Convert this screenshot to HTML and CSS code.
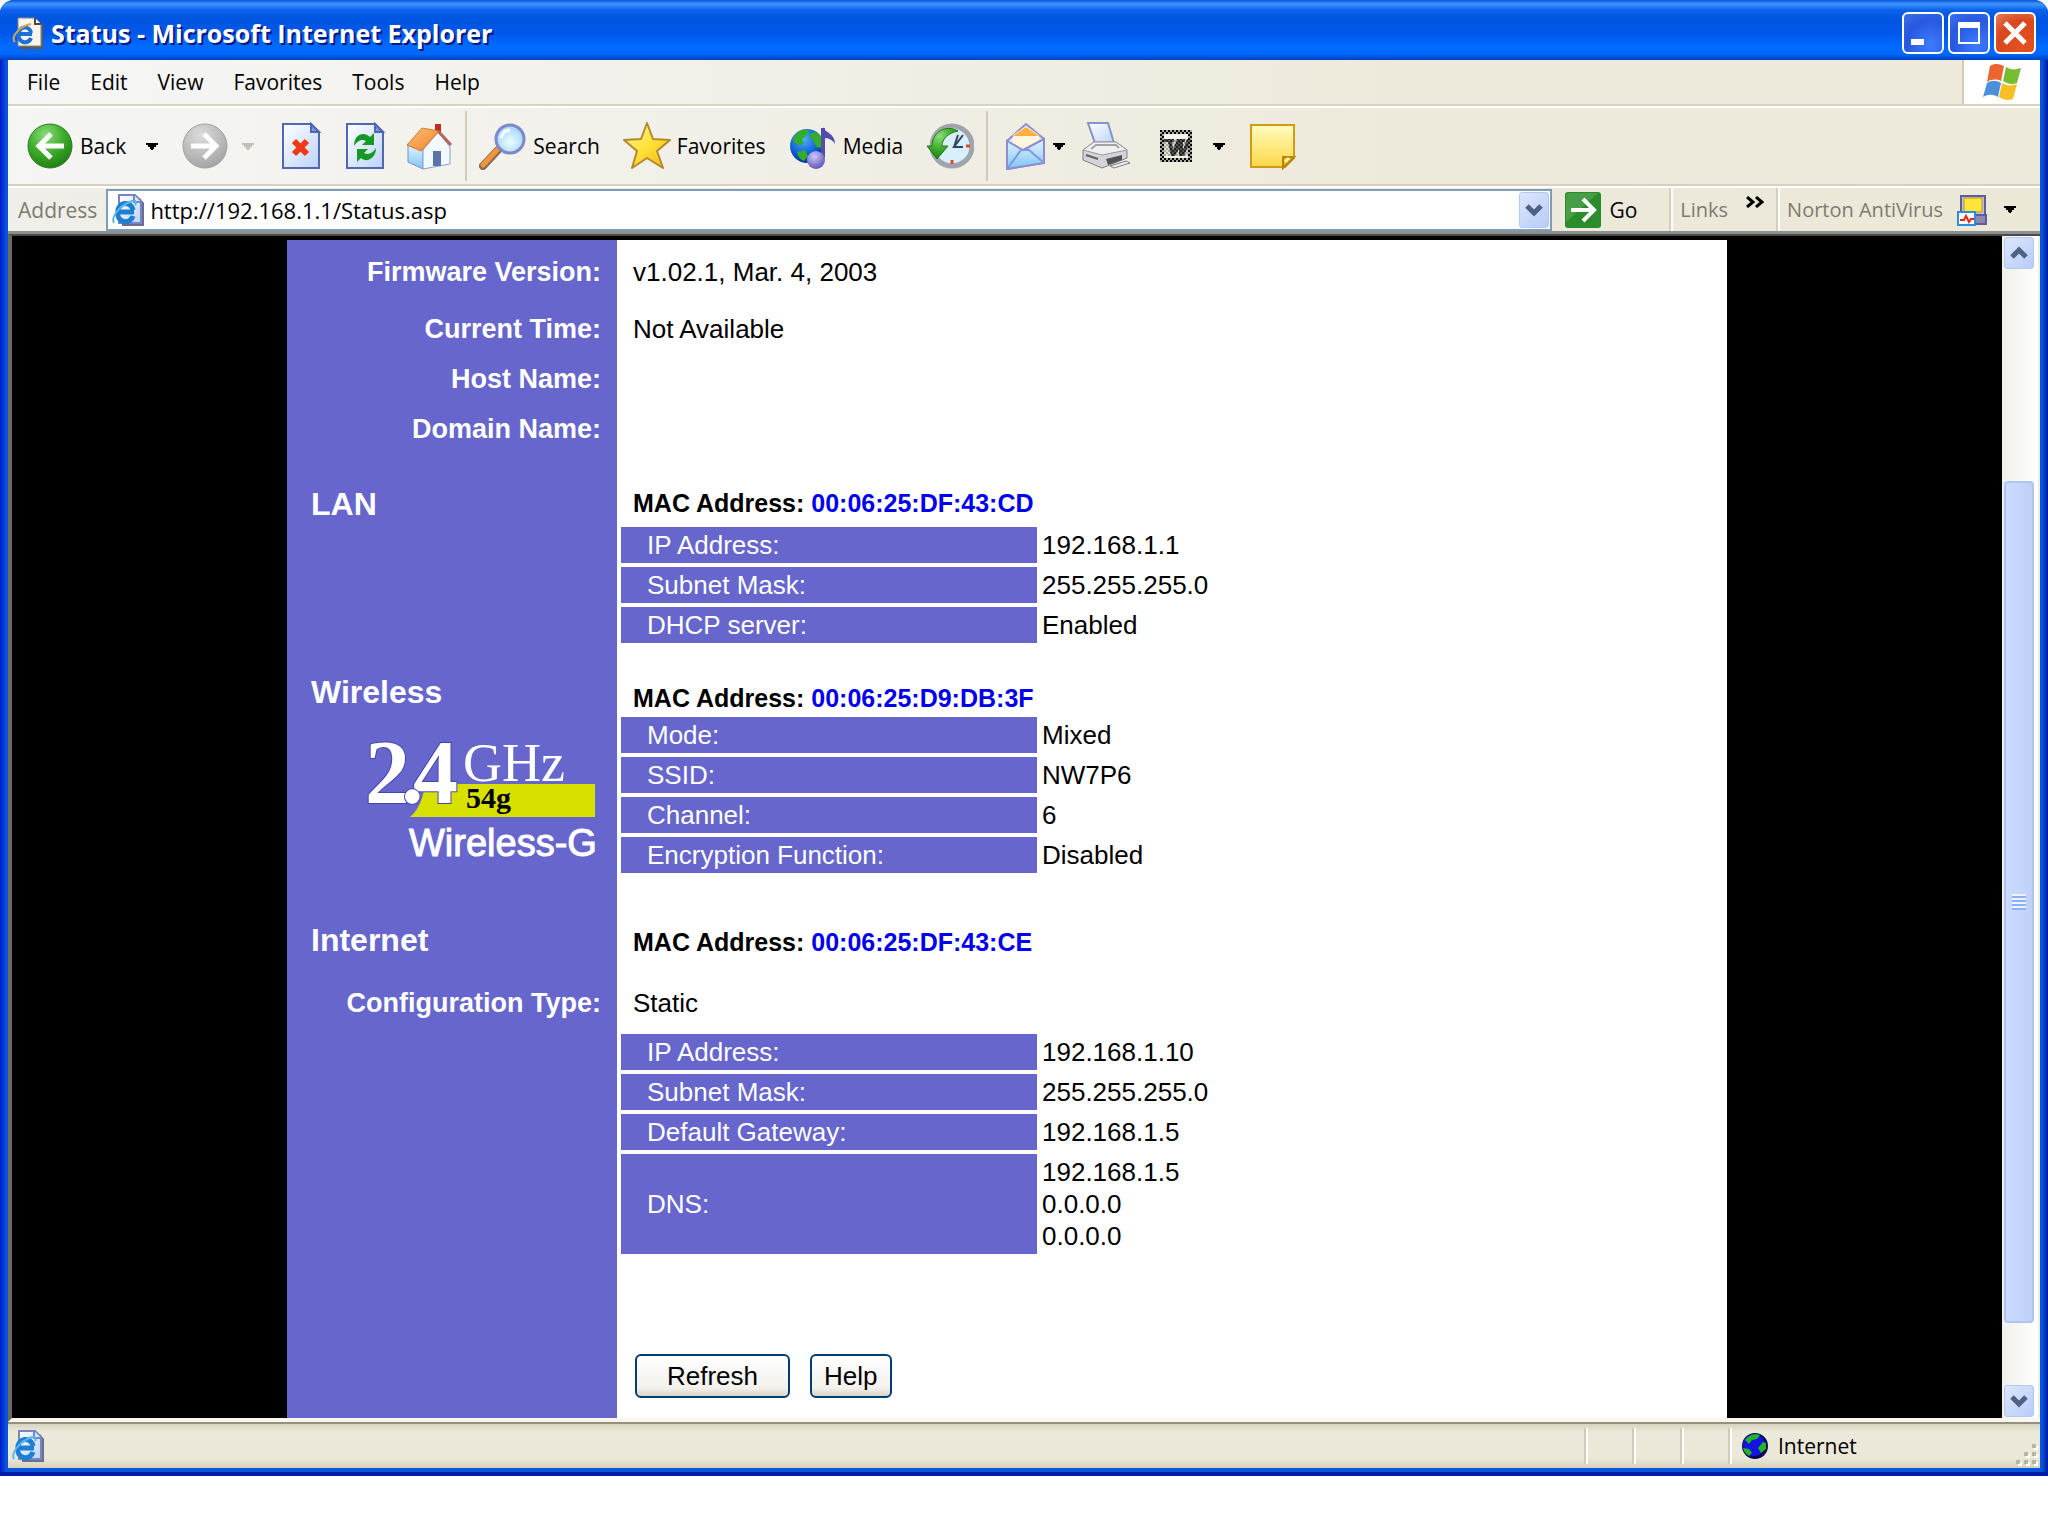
FILE: index.html
```html
<!DOCTYPE html>
<html lang="en">
<head>
    <meta charset="UTF-8">
    <meta name="viewport" content="width=device-width, initial-scale=1.0">
    <title>Status - Microsoft Internet Explorer</title>
    <link rel="stylesheet" href="styles.css">
</head>
<body>
    <!-- shared gradients and symbols -->
    <svg class="defs" width="0" height="0" aria-hidden="true">
        <defs>
            <radialGradient id="green" cx="0.4" cy="0.25" r="0.8">
                <stop offset="0" stop-color="#8fdc7c"/>
                <stop offset="0.5" stop-color="#3fae2c"/>
                <stop offset="1" stop-color="#1d7a12"/>
            </radialGradient>
            <radialGradient id="grey" cx="0.4" cy="0.25" r="0.8">
                <stop offset="0" stop-color="#dcdcdc"/>
                <stop offset="1" stop-color="#a2a2a2"/>
            </radialGradient>
            <linearGradient id="paper" x1="0" y1="0" x2="1" y2="1">
                <stop offset="0" stop-color="#ffffff"/>
                <stop offset="1" stop-color="#bcd2fa"/>
            </linearGradient>
            <linearGradient id="roof" x1="0" y1="0" x2="1" y2="1">
                <stop offset="0" stop-color="#ffc27a"/>
                <stop offset="1" stop-color="#f08028"/>
            </linearGradient>
            <linearGradient id="sky" x1="0" y1="0" x2="0" y2="1">
                <stop offset="0" stop-color="#e4f6ff"/>
                <stop offset="1" stop-color="#7fc4f4"/>
            </linearGradient>
            <radialGradient id="lens" cx="0.5" cy="0.6" r="0.6">
                <stop offset="0" stop-color="#eaffff"/>
                <stop offset="1" stop-color="#9fd0fb"/>
            </radialGradient>
            <linearGradient id="gold" x1="0" y1="0" x2="1" y2="1">
                <stop offset="0" stop-color="#fff9a8"/>
                <stop offset="0.5" stop-color="#ffe23a"/>
                <stop offset="1" stop-color="#f8b414"/>
            </linearGradient>
            <radialGradient id="ocean" cx="0.4" cy="0.3" r="0.8">
                <stop offset="0" stop-color="#4fb0ff"/>
                <stop offset="0.6" stop-color="#0a5ad0"/>
                <stop offset="1" stop-color="#04256e"/>
            </radialGradient>
            <radialGradient id="violet" cx="0.4" cy="0.3" r="0.8">
                <stop offset="0" stop-color="#cdc8ff"/>
                <stop offset="1" stop-color="#5048a8"/>
            </radialGradient>
            <linearGradient id="note" x1="0" y1="0" x2="0" y2="1">
                <stop offset="0" stop-color="#fffcc0"/>
                <stop offset="1" stop-color="#fcd848"/>
            </linearGradient>
            <pattern id="dither" width="4" height="4" patternUnits="userSpaceOnUse">
                <rect width="4" height="4" fill="#a8a8a0"/>
                <rect width="2" height="2" fill="#000"/>
                <rect x="2" y="2" width="2" height="2" fill="#000"/>
            </pattern>
        </defs>
        <symbol id="page-icon" viewBox="0 0 32 32">
            <path d="M10 4h18l4 5v23H10z" fill="#6c6c94"/>
            <path d="M7 1h16l6 6v22H7z" fill="url(#paper)" stroke="#7486c4" stroke-width="2"/>
            <path d="M22 1v7h7" fill="#dfe8ff" stroke="#7486c4" stroke-width="2"/>
            <path d="M22 18H6a7 7 0 0 1 15-2M6 18a7 7 0 0 0 15 4" fill="none" stroke="#1c7fd0" stroke-width="5"/>
            <path d="M2 29C-1 24 6 12 20 7c4-1 5 1 3 4" fill="none" stroke="#5ab6f0" stroke-width="2"/>
        </symbol>
        <symbol id="chevron" viewBox="0 0 18 14">
            <path d="M2 3l7 7 7-7" fill="none" stroke="#4d6185" stroke-width="5"/>
        </symbol>
        <symbol id="drop" viewBox="0 0 12 7">
            <path d="M0 0h12v2h-2v2h-2v2h-1v1H5V6H4V4H2V2H0z"/>
        </symbol>
    </svg>

    <div class="window">
        <header class="title-bar">
            <svg class="title-icon" viewBox="0 0 32 32">
                <path d="M8 3h18l5 5v24H8z" fill="#5a5a50"/>
                <path d="M6 1h17l6 6v22H6z" fill="#f6f4ec" stroke="#8a8878" stroke-width="1"/>
                <path d="M23 1v6h6" fill="#fff" stroke="#4a4a40" stroke-width="2"/>
                <path d="M20 17H7a6 6 0 0 1 12-1M7 17a6 6 0 0 0 12 4" fill="none" stroke="#1c70d8" stroke-width="4"/>
                <path d="M3 25C-2 20 8 9 19 7" fill="none" stroke="#d0a850" stroke-width="2"/>
            </svg>
            <h1 class="title">Status - Microsoft Internet Explorer</h1>
            <button class="caption" aria-label="Minimize">
                <svg viewBox="0 0 38 38"><path d="M7 25h13v6H7z" fill="#fff"/></svg>
            </button>
            <button class="caption" aria-label="Maximize">
                <svg viewBox="0 0 38 38"><path d="M8 8h22v22H8zM10 14v14h18V14z" fill="#fff" fill-rule="evenodd"/></svg>
            </button>
            <button class="caption close" aria-label="Close">
                <svg viewBox="0 0 38 38"><path d="M9 9l20 20M29 9L9 29" stroke="#fff" stroke-width="5"/></svg>
            </button>
        </header>

        <nav class="menu-bar">
            <button>File</button>
            <button>Edit</button>
            <button>View</button>
            <button>Favorites</button>
            <button>Tools</button>
            <button>Help</button>
            <div class="flag">
                <svg viewBox="0 0 40 38">
                    <path d="M8 3c5-3 9-2 14 0l-3 15c-5-2-9-2-14 1z" fill="#ee6430"/>
                    <path d="M24 4c5 3 9 3 15 1l-4 15c-5 2-9 1-14-2z" fill="#78bc34"/>
                    <path d="M5 20c5-3 9-3 14 0l-3 14c-5-3-10-3-15 0z" fill="#4c90dc"/>
                    <path d="M20 20c5 3 10 3 15 1l-4 15c-5 2-9 1-14-2z" fill="#f6c024"/>
                </svg>
            </div>
        </nav>

        <div class="toolbar">
            <button class="tool text">
                <svg viewBox="0 0 48 48">
                    <circle cx="24" cy="24" r="22" fill="url(#green)" stroke="#2c7c20" stroke-width="1"/>
                    <path d="M38 24H13M25 12L13 24l12 12" fill="none" stroke="#fff" stroke-width="5"/>
                </svg>
                <span>Back</span>
            </button>
            <button class="arrow" aria-label="Back history"><svg><use href="#drop"/></svg></button>
            <button class="tool" aria-label="Forward" disabled>
                <svg viewBox="0 0 48 48">
                    <circle cx="24" cy="24" r="22" fill="url(#grey)" stroke="#a0a0a0" stroke-width="1"/>
                    <path d="M10 24h25M23 12l12 12-12 12" fill="none" stroke="#fff" stroke-width="5"/>
                </svg>
            </button>
            <button class="arrow off" aria-label="Forward history" disabled><svg><use href="#drop"/></svg></button>
            <button class="tool" aria-label="Stop">
                <svg viewBox="0 0 48 48">
                    <path d="M6 2h28l8 8v36H6z" fill="url(#paper)" stroke="#5068b4" stroke-width="2"/>
                    <path d="M34 2v8h8z" fill="#7c98dc" stroke="#5068b4" stroke-width="2"/>
                    <path d="M17 19l13 13M30 19L17 32" stroke="#f03818" stroke-width="6"/>
                </svg>
            </button>
            <button class="tool" aria-label="Refresh">
                <svg viewBox="0 0 48 48">
                    <path d="M6 2h28l8 8v36H6z" fill="url(#paper)" stroke="#5068b4" stroke-width="2"/>
                    <path d="M34 2v8h8z" fill="#7c98dc" stroke="#5068b4" stroke-width="2"/>
                    <path d="M13 24c0-12 10-15 16-9l4-4v12H21l4-4c-4-2-8-1-12 5z" fill="#149a24"/>
                    <path d="M35 26c0 11-10 15-15 10l-4 4V27h11l-4 4c4 2 8 1 12-5z" fill="#149a24"/>
                </svg>
            </button>
            <button class="tool" aria-label="Home">
                <svg viewBox="0 0 48 48">
                    <path d="M30 2h6v12h-6z" fill="#c02c20"/>
                    <path d="M3 22v18l15 7V22z" fill="url(#sky)" stroke="#6c94c8" stroke-width="1"/>
                    <path d="M18 28L33 10l12 15v17L18 47z" fill="#f4f8ff" stroke="#8ca0cc" stroke-width="1"/>
                    <path d="M28 29h8v15h-8z" fill="#5a74a8"/>
                    <path d="M17 6l17 3-18 20L2 23z" fill="url(#roof)" stroke="#d87828" stroke-width="1"/>
                    <path d="M33 9l13 14" stroke="#b06858" stroke-width="3"/>
                </svg>
            </button>
            <span class="sep"></span>
            <button class="tool text">
                <svg viewBox="0 0 48 48">
                    <path d="M4 44l15-16" stroke="#8c6c58" stroke-width="8" stroke-linecap="round"/>
                    <path d="M4 43l14-15" stroke="#f09838" stroke-width="5" stroke-linecap="round"/>
                    <circle cx="31" cy="17" r="14" fill="url(#lens)" stroke="#7c88cc" stroke-width="3"/>
                    <path d="M22 16c1-5 4-8 9-8" fill="none" stroke="#fff" stroke-width="3"/>
                </svg>
                <span>Search</span>
            </button>
            <button class="tool text">
                <svg viewBox="0 0 48 48">
                    <path d="M24 1l6 16 17 1-13 11 6 17-16-10-15 10 5-17L1 18l17-1z" fill="url(#gold)" stroke="#b4882c" stroke-width="2" stroke-linejoin="round"/>
                </svg>
                <span>Favorites</span>
            </button>
            <button class="tool text">
                <svg viewBox="0 0 48 48">
                    <circle cx="18" cy="24" r="17" fill="url(#ocean)"/>
                    <path d="M5 15c5-8 12-8 15-7l-2 5-5 4 2 5-6 1-5-4zM24 10c5 0 8 3 9 8v8l-6-1-3-7-4-3zM8 30l8-2 3 6-4 5c-4-2-6-4-7-9z" fill="#34ac2c"/>
                    <path d="M34 6v30" stroke="#544cac" stroke-width="4"/>
                    <path d="M34 5c2 6 12 6 12 17-3-5-7-6-12-6z" fill="#544cac"/>
                    <circle cx="27" cy="38" r="9" fill="url(#violet)"/>
                </svg>
                <span>Media</span>
            </button>
            <button class="tool" aria-label="History">
                <svg viewBox="0 0 48 48">
                    <circle cx="26" cy="24" r="20" fill="#d8f0fc" stroke="#a0a4ac" stroke-width="5"/>
                    <path d="M26 38v4M40 24h4" stroke="#e04828" stroke-width="3"/>
                    <path d="M37 13L28 25h9M28 25l4-12" fill="none" stroke="#34445c" stroke-width="2"/>
                    <path d="M32 9C20 2 6 10 6 24H1l10 13 11-13h-6c0-7 6-13 16-15z" fill="url(#green)" stroke="#1c7c14" stroke-width="1"/>
                </svg>
            </button>
            <span class="sep"></span>
            <button class="tool mail" aria-label="Mail">
                <svg viewBox="0 0 40 48">
                    <path d="M1 19L20 2l18 15v24L1 47z" fill="#e4e8ff" stroke="#8c8cd0" stroke-width="2"/>
                    <path d="M7 13l13-9 13 9v11l-13 8-13-6z" fill="#fff4dc"/>
                    <path d="M7 14l13-9 13 9z" fill="#fbb040"/>
                    <path d="M1 19l16 9 21-11v24L1 47z" fill="url(#sky)" stroke="#8c8cd0" stroke-width="2"/>
                    <path d="M1 47l14-19h8l15 13" fill="none" stroke="#8098dc" stroke-width="2"/>
                </svg>
            </button>
            <button class="arrow mail-arrow" aria-label="Mail options"><svg><use href="#drop"/></svg></button>
            <button class="tool print" aria-label="Print">
                <svg viewBox="0 0 48 48">
                    <path d="M6 1h20l6 20H13z" fill="url(#paper)" stroke="#8494cc" stroke-width="2"/>
                    <path d="M1 28l11-8h22l11 8v8L20 46 1 38z" fill="#d4d4d8" stroke="#808084" stroke-width="1"/>
                    <path d="M1 28l19 5 25-5-11-8H12z" fill="#f0f0f2" stroke="#98989c" stroke-width="1"/>
                    <path d="M9 27l5-4h20l3 3" fill="none" stroke="#a4a4a8" stroke-width="2"/>
                    <path d="M24 37l16-4v5l-14 5z" fill="#505058"/>
                    <path d="M28 44l16-5 4 2-16 5z" fill="#ececf0" stroke="#808084" stroke-width="1"/>
                    <path d="M4 33l12 4" stroke="#606064" stroke-width="2"/>
                </svg>
            </button>
            <button class="tool" aria-label="Edit with Word">
                <svg viewBox="0 0 48 48">
                    <path d="M8 8h32v32H8z" fill="url(#dither)"/>
                    <path d="M12 12h24v24H12z" fill="#f4f4ea"/>
                    <path d="M12 17h10v3h-2l1 8 4-11h8v3h-2v8l4-11h3v3l-6 14h-5v-7l-4 7h-4l-3-14h-4z" fill="#303030"/>
                    <path d="M12 17h26v17H12z" fill="url(#dither)" opacity="0.3"/>
                </svg>
            </button>
            <button class="arrow" aria-label="Edit options"><svg><use href="#drop"/></svg></button>
            <button class="tool" aria-label="Discuss">
                <svg viewBox="0 0 48 48">
                    <path d="M3 3h43v33l-9 9H3z" fill="url(#note)" stroke="#d09c18" stroke-width="2"/>
                    <path d="M35 46V35h11z" fill="#e8b830" stroke="#b88408" stroke-width="2"/>
                    <path d="M37 40l4-4" stroke="#fff4a0" stroke-width="3"/>
                </svg>
            </button>
        </div>

        <div class="address-bar">
            <label class="muted" for="address">Address</label>
            <div class="combo">
                <svg class="page-icon"><use href="#page-icon"/></svg>
                <input type="text" id="address" value="http://192.168.1.1/Status.asp">
                <button class="scroll-button" aria-label="Show addresses"><svg><use href="#chevron"/></svg></button>
            </div>
            <button class="go">
                <svg viewBox="0 0 36 36">
                    <rect width="36" height="36" rx="3" fill="#2c8c2c"/>
                    <path d="M3 1h30L1 30V3z" fill="#58ac58" opacity="0.6"/>
                    <path d="M6 18h22M18 7l11 11-11 11" fill="none" stroke="#fff" stroke-width="4"/>
                </svg>
                <span>Go</span>
            </button>
            <div class="band links">
                <span class="muted">Links</span>
                <svg class="more" viewBox="0 0 18 12"><path d="M1 1l6 5-6 5M10 1l6 5-6 5" fill="none" stroke="#000" stroke-width="3"/></svg>
            </div>
            <div class="band norton">
                <span class="muted">Norton AntiVirus</span>
                <svg class="norton-icon" viewBox="0 0 32 32">
                    <path d="M4 2h24v21H4z" fill="#c4c0dc" stroke="#605c98" stroke-width="2"/>
                    <path d="M7 4h18v14H7z" fill="#ffe43c" stroke="#b89820" stroke-width="1"/>
                    <path d="M18 21h11v9H18z" fill="#8c88b4" stroke="#605c98" stroke-width="2"/>
                    <path d="M1 18h17v13H1z" fill="#fff" stroke="#2890dc" stroke-width="2"/>
                    <path d="M3 26h4l2-4 3 6 2-3h3" fill="none" stroke="#e02818" stroke-width="2"/>
                </svg>
                <button class="arrow" aria-label="Norton AntiVirus options"><svg><use href="#drop"/></svg></button>
            </div>
        </div>

        <div class="viewport">
            <main class="page">
                <div class="row first">
                    <div class="side label">Firmware Version:</div>
                    <div class="main value">v1.02.1, Mar. 4, 2003</div>
                </div>
                <div class="row">
                    <div class="side label">Current Time:</div>
                    <div class="main value">Not Available</div>
                </div>
                <div class="row">
                    <div class="side label">Host Name:</div>
                    <div class="main value"></div>
                </div>
                <div class="row">
                    <div class="side label">Domain Name:</div>
                    <div class="main value"></div>
                </div>

                <section class="row block lan">
                    <div class="side">
                        <h2>LAN</h2>
                    </div>
                    <div class="main">
                        <p class="mac">MAC Address: <span>00:06:25:DF:43:CD</span></p>
                        <table>
                            <tr><th>IP Address:</th><td>192.168.1.1</td></tr>
                            <tr><th>Subnet Mask:</th><td>255.255.255.0</td></tr>
                            <tr><th>DHCP server:</th><td>Enabled</td></tr>
                        </table>
                    </div>
                </section>

                <section class="row block wireless">
                    <div class="side">
                        <h2>Wireless</h2>
                        <svg class="logo" viewBox="0 0 240 130">
                            <path d="M72 51h170v33H57q12-10 15-33z" fill="#d8e000"/>
                            <g class="logo-big">
                                <text x="12" y="70">2</text>
                                <text x="60" y="70">4</text>
                                <text x="48" y="70">.</text>
                            </g>
                            <text class="logo-ghz" x="110" y="48">GHz</text>
                            <text class="logo-54g" x="113" y="75">54g</text>
                            <text class="logo-name" x="56" y="123">Wireless-G</text>
                        </svg>
                    </div>
                    <div class="main">
                        <p class="mac">MAC Address: <span>00:06:25:D9:DB:3F</span></p>
                        <table>
                            <tr><th>Mode:</th><td>Mixed</td></tr>
                            <tr><th>SSID:</th><td>NW7P6</td></tr>
                            <tr><th>Channel:</th><td>6</td></tr>
                            <tr><th>Encryption Function:</th><td>Disabled</td></tr>
                        </table>
                    </div>
                </section>

                <section class="row block internet">
                    <div class="side">
                        <h2>Internet</h2>
                        <p class="label config">Configuration Type:</p>
                    </div>
                    <div class="main">
                        <p class="mac">MAC Address: <span>00:06:25:DF:43:CE</span></p>
                        <p class="value config">Static</p>
                        <table>
                            <tr><th>IP Address:</th><td>192.168.1.10</td></tr>
                            <tr><th>Subnet Mask:</th><td>255.255.255.0</td></tr>
                            <tr><th>Default Gateway:</th><td>192.168.1.5</td></tr>
                            <tr><th>DNS:</th><td>192.168.1.5<br>0.0.0.0<br>0.0.0.0</td></tr>
                        </table>
                        <div class="actions">
                            <button class="refresh">Refresh</button>
                            <button>Help</button>
                        </div>
                    </div>
                </section>
            </main>

            <div class="scrollbar">
                <button class="scroll-button up" aria-label="Scroll up"><svg><use href="#chevron"/></svg></button>
                <div class="track">
                    <div class="thumb"><span class="thumb-grip"></span></div>
                </div>
                <button class="scroll-button" aria-label="Scroll down"><svg><use href="#chevron"/></svg></button>
            </div>
        </div>

        <footer class="status-bar">
            <svg class="page-icon"><use href="#page-icon"/></svg>
            <span class="pane wide"></span>
            <span class="pane"></span>
            <span class="pane"></span>
            <span class="pane"></span>
            <span class="pane zone">
                <svg class="globe" viewBox="0 0 26 26">
                    <circle cx="13" cy="13" r="13" fill="#0a0a50"/>
                    <circle cx="12" cy="12" r="11" fill="#1414e0"/>
                    <path d="M3 7c5-7 13-6 15-5l-3 4-5 1-3 4zM21 9l3 1v6l-5 4-3-5zM1 15l6 1 3 4-3 3c-3-2-5-4-6-8z" fill="#24b424"/>
                </svg>
                Internet
            </span>
            <svg class="grip" viewBox="0 0 24 24">
                <path d="M18 2h4v4h-4zM10 10h4v4h-4zM18 10h4v4h-4zM2 18h4v4H2zM10 18h4v4h-4zM18 18h4v4h-4z" fill="#fff"/>
                <path d="M16 0h4v4h-4zM8 8h4v4H8zM16 8h4v4h-4zM0 16h4v4H0zM8 16h4v4H8zM16 16h4v4h-4z" fill="#b8b4a0"/>
            </svg>
        </footer>
    </div>
</body>
</html>
```

FILE: styles.css
```css
* {
    box-sizing: border-box;
}

body {
    margin: 0;
    background-color: #fff;
    color: #000;
    font-family: "Open Sans", "Noto Sans", sans-serif;
    font-size: 21px;
}

button {
    display: flex;
    align-items: center;
    padding: 0;
    border: none;
    background: none;
    color: #000;
    font: inherit;
}

svg {
    display: block;
}

h1, h2, p {
    margin: 0;
}

.defs {
    position: absolute;
}

.window {
    padding: 0 8px 8px;
    background: linear-gradient(to right, #0019cf, #0855dd 6px, #0855dd calc(100% - 6px), #0019a0);
    border-radius: 14px 14px 0 0;
    box-shadow: inset 0 -4px #001ca8;
}

/* title bar */
.title-bar {
    display: flex;
    align-items: center;
    gap: 4px;
    height: 60px;
    margin: 0 -8px;
    padding: 6px 12px 0;
    border-radius: 14px 14px 0 0;
    background: linear-gradient(#0b52d8, #3f97ff 4px, #0b62ea 10px, #0054e0 20px, #0058ec 34px, #006bff 46px, #0068fc 54px, #0040c0);
}

.title-icon {
    width: 32px;
    height: 32px;
}

.title {
    flex: 1;
    padding-left: 3px;
    color: #fff;
    font-size: 25px;
    font-weight: 700;
    line-height: 40px;
    text-shadow: 2px 2px #0a1883;
}

.caption {
    width: 42px;
    height: 42px;
    border: 2px solid #fff;
    border-radius: 6px;
    background: radial-gradient(circle at 70% 80%, #3c7cfc, #2858e0 60%, #3c70e8);
}

.caption svg {
    width: 38px;
    height: 38px;
}

.close {
    background: radial-gradient(circle at 70% 80%, #e85020, #d84820 60%, #e88060);
}

/* menu */
.menu-bar {
    display: flex;
    height: 46px;
    padding-left: 4px;
    border-bottom: 2px solid #d8d4c0;
    background: linear-gradient(to right, #f6f6f6, #edeadb 70%);
}

.menu-bar button {
    padding: 0 15px;
}

.flag {
    display: flex;
    justify-content: center;
    align-items: center;
    width: 78px;
    margin-left: auto;
    border-left: 2px solid #d0ccb8;
    background-color: #fff;
}

.flag svg {
    width: 40px;
    height: 38px;
}

/* buttons */
.toolbar {
    display: flex;
    align-items: center;
    height: 80px;
    padding-left: 10px;
    border-top: 2px solid #fff;
    border-bottom: 2px solid #d8d0bc;
    background: linear-gradient(to right, #f5f5f4, #edeadb 70%);
}

.tool {
    gap: 6px;
    padding: 0 8px;
}

.tool svg {
    width: 48px;
    height: 48px;
}

.tool.text {
    padding-right: 15px;
}

.tool.mail {
    padding: 0 2px 0 14px;
}

.tool.mail svg {
    width: 40px;
}

.tool.print {
    padding-right: 14px;
}

.arrow {
    padding: 0 15px 0 5px;
}

.mail-arrow {
    padding-right: 9px;
}

.arrow svg {
    width: 12px;
    height: 7px;
}

.off {
    fill: #c0bfb8;
}

.sep {
    width: 2px;
    height: 70px;
    margin: 0 4px;
    background-color: #cfcbb8;
}

/* address */
.address-bar {
    display: flex;
    align-items: center;
    height: 48px;
    padding-left: 10px;
    border-top: 2px solid #fff;
    border-bottom: 3px solid #8c9090;
    background: linear-gradient(to right, #efeee8, #ebe8d7);
}

.muted {
    color: #7d7b70;
}

.combo {
    flex: 1;
    display: flex;
    align-items: center;
    height: 42px;
    margin-left: 9px;
    padding: 0 1px 0 4px;
    border: 2px solid #7f9db9;
    background-color: #fff;
}

.page-icon {
    width: 32px;
    height: 32px;
}

.combo input {
    flex: 1;
    min-width: 0;
    padding: 0 6px;
    border: none;
    outline: none;
    background: none;
    font: inherit;
    font-size: 22px;
}

.scroll-button {
    justify-content: center;
    width: 30px;
    height: 32px;
    flex-shrink: 0;
    border: 1px solid #b4c8f6;
    border-radius: 3px;
    background: linear-gradient(135deg, #dce6fe, #b8ccf8);
}

.combo .scroll-button {
    height: 36px;
}

.scroll-button svg {
    width: 18px;
    height: 14px;
}

.up svg {
    transform: rotate(180deg);
}

.go {
    gap: 8px;
    padding: 0 34px 0 13px;
}

.go svg {
    width: 36px;
    height: 36px;
}

.band {
    display: flex;
    align-items: center;
    height: 100%;
    padding-left: 7px;
    border-left: 2px solid #fff;
    box-shadow: -2px 0 #d4d0bc;
    font-size: 20px;
}

.more {
    width: 18px;
    height: 12px;
    margin: 0 14px 16px 18px;
}

.norton-icon {
    width: 32px;
    height: 32px;
    margin: 0 10px 0 14px;
}

.norton .arrow {
    padding-right: 24px;
}

/* document area */
.viewport {
    display: flex;
    border-top: 2px solid #4c4a44;
    border-left: 4px solid #6c6a60;
    border-bottom: 4px solid #f8f6ee;
    background-color: #000;
    font-family: "Liberation Sans", Arial, sans-serif;
    font-size: 26px;
}

.page {
    flex: 1;
    max-width: 1440px;
    margin: 4px auto 0;
    background: linear-gradient(to right, #6666cc 330px, #fff 330px);
}

.row {
    display: grid;
    grid-template-columns: 330px 1fr;
    min-height: 50px;
    align-items: center;
    line-height: 32px;
}

.first {
    min-height: 64px;
}

.label {
    padding-right: 16px;
    color: #fff;
    font-size: 27px;
    font-weight: bold;
    text-align: right;
}

.value {
    padding-left: 16px;
}

.block {
    align-items: start;
}

.block .main {
    padding-left: 4px;
}

.block .value {
    padding-left: 12px;
}

.lan {
    padding: 33px 0 28px;
}

h2 {
    padding-left: 24px;
    color: #fff;
    font-size: 32px;
    line-height: 34px;
}

.mac {
    padding: 0 0 8px 12px;
    font-size: 25px;
    font-weight: bold;
}

.mac span {
    color: #0000ee;
}

.wireless .mac {
    padding-top: 7px;
    padding-bottom: 3px;
}

.internet .mac {
    padding-top: 3px;
    padding-bottom: 3px;
}

table {
    border-collapse: collapse;
}

th {
    width: 416px;
    padding: 2px 0 2px 26px;
    border-bottom: 4px solid #fff;
    background-color: #6666cc;
    background-clip: padding-box;
    color: #fff;
    font-weight: normal;
    text-align: left;
}

td {
    padding: 2px 5px;
    border-bottom: 4px solid #fff;
}

/* 2.4GHz badge */
.logo {
    width: 240px;
    height: 130px;
    margin: 24px 0 0 66px;
    overflow: visible;
    fill: #fff;
    font-family: "Liberation Serif", "Times New Roman", serif;
}

.logo-big {
    font-size: 90px;
    font-weight: bold;
    stroke: #4444b0;
    stroke-width: 2px;
    paint-order: stroke;
}

.logo-ghz {
    font-size: 54px;
}

.logo-54g {
    fill: #000;
    font-size: 30px;
    font-weight: bold;
}

.logo-name {
    font-family: "Liberation Sans", Arial, sans-serif;
    font-size: 38px;
    stroke: #fff;
    stroke-width: 1px;
}

.internet {
    padding-top: 46px;
}

.config {
    padding-top: 26px;
    padding-bottom: 15px;
}

.label.config {
    padding-top: 30px;
}

.actions {
    display: flex;
    gap: 20px;
    padding: 96px 0 20px 14px;
}

.actions button {
    justify-content: center;
    height: 44px;
    padding: 0 12px;
    border: 2px solid #003c74;
    border-radius: 6px;
    background: linear-gradient(#fff, #f2f1ec 80%, #dcd4c8);
}

.actions .refresh {
    padding: 0 30px;
}

.scrollbar {
    display: flex;
    flex-direction: column;
    align-items: center;
    width: 38px;
    padding: 1px 3px 1px 0;
    border-right: 2px solid #efece0;
    background: linear-gradient(to right, #f0efe8, #fff);
}

.track {
    flex: 1;
    display: flex;
    flex-direction: column;
}

/* spacers above and below place the thumb */
.track::before {
    content: "";
    flex: 213;
}

.track::after {
    content: "";
    flex: 62;
}

.thumb {
    flex: 842;
    display: flex;
    justify-content: center;
    align-items: center;
    width: 30px;
    border: 2px solid #b0c4f4;
    border-radius: 4px;
    background: linear-gradient(to right, #ccdafe, #c0d0fa);
}

.thumb-grip {
    width: 14px;
    height: 16px;
    background: repeating-linear-gradient(#eef4fe 0 2px, #8cb0f8 2px 4px);
}

/* status */
.status-bar {
    display: flex;
    align-items: center;
    height: 46px;
    padding-left: 4px;
    border-top: 2px solid #94927e;
    background: linear-gradient(#d8d4c0, #ebe9d9 8px, #ebe8d8 34px, #d4d0bc);
}

.pane {
    display: flex;
    align-items: center;
    width: 48px;
    height: 36px;
    border-left: 2px solid #fff;
    box-shadow: -2px 0 #d0ccb8;
}

.wide {
    flex: 1;
    border: none;
    box-shadow: none;
}

.zone {
    gap: 10px;
    width: 286px;
    padding-left: 10px;
}

.globe {
    width: 26px;
    height: 26px;
}

.grip {
    width: 24px;
    height: 24px;
    align-self: flex-end;
}
```
